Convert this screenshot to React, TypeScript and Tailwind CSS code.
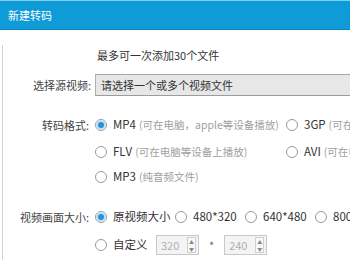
const font = { fontFamily: '"Noto Sans CJK SC", "Microsoft YaHei", sans-serif' };

const Radio = ({ checked }: { checked?: boolean }) => (
  <span className="relative inline-flex h-[12px] w-[12px] shrink-0 items-center justify-center rounded-full border border-[#9a9a9a] bg-white">
    {checked && <span className="h-[6px] w-[6px] rounded-full bg-[#2b8fd6] ring-2 ring-[#bfe0f5]" />}
  </span>
);

const Option = ({ checked, label, hint, className = "" }: { checked?: boolean; label: string; hint?: string; className?: string }) => (
  <div className={"flex shrink-0 items-center whitespace-nowrap " + className}>
    <Radio checked={checked} />
    <span className="ml-[6px] text-[11.5px] text-[#333]">{label}</span>
    {hint && <span className="ml-[3px] text-[10.5px] text-[#a0a0a0]">{hint}</span>}
  </div>
);

const SpinBox = ({ value }: { value: string }) => (
  <div className="flex h-[20px] w-[43px] shrink-0 items-center border border-[#c8c8c8] bg-[#f4f4f4]">
    <span className="ml-[4px] flex-1 text-[11px] text-[#b0b0b0]">{value}</span>
    <div className="mr-[2px] flex h-[16px] w-[9px] flex-col border border-[#cfcfcf] bg-[#f8f8f8]">
      <span className="flex flex-1 items-center justify-center text-[5px] leading-none text-[#888]">▲</span>
      <span className="flex flex-1 items-center justify-center text-[5px] leading-none text-[#888]">▼</span>
    </div>
  </div>
);

export default function App() {
  return (
    <div className="h-[260px] w-[350px] overflow-hidden bg-white" style={font}>
      {/* title bar */}
      <div className="flex h-[30px] items-center border-t border-t-[#7fd0f0] border-b border-b-[#0b86bf] bg-[#0f9ad8] pl-[8px] text-[11px] text-white">
        新建转码
      </div>

      <div className="ml-[2px] h-[230px] border-l border-[#d4d4d4]">
        <div className="mt-[15px] flex h-[20px] items-center pl-[94px] text-[11px] text-[#333]">
          最多可一次添加30个文件
        </div>

        {/* source */}
        <div className="mt-[9px] flex items-center">
          <div className="w-[88px] shrink-0 text-right text-[11px] text-[#444]">选择源视频:</div>
          <div className="ml-[4px] flex h-[22px] flex-1 items-center whitespace-nowrap border-y border-l border-t-[#a8a8a8] border-b-[#9c9c9c] border-l-[#b0b0b0] bg-[#e7e7e7] pl-[5px] text-[11px] text-[#333]">
            请选择一个或多个视频文件
          </div>
        </div>

        {/* format */}
        <div className="mt-[17px] flex">
          <div className="w-[86px] shrink-0 whitespace-nowrap pt-[4px] text-right text-[11px] text-[#444]">转码格式:</div>
          <div className="ml-[6px] flex shrink-0 flex-col">
            <div className="flex h-[24px]">
              <Option checked label="MP4" hint="(可在电脑，apple等设备播放)" className="w-[191px]" />
              <Option label="3GP" hint="(可在电脑等设备上播放)" />
            </div>
            <div className="mt-[3px] flex h-[24px]">
              <Option label="FLV" hint="(可在电脑等设备上播放)" className="w-[191px]" />
              <Option label="AVI" hint="(可在电脑等设备上播放)" />
            </div>
            <div className="mt-[1px] flex h-[24px]">
              <Option label="MP3" hint="(纯音频文件)" />
            </div>
          </div>
        </div>

        {/* size */}
        <div className="mt-[16px] flex">
          <div className="w-[86px] shrink-0 whitespace-nowrap pt-[4px] text-right text-[11px] text-[#444]">视频画面大小:</div>
          <div className="ml-[6px] flex shrink-0 flex-col">
            <div className="flex h-[24px] whitespace-nowrap">
              <Option checked label="原视频大小" className="w-[80px]" />
              <Option label="480*320" className="w-[70px]" />
              <Option label="640*480" className="w-[70px]" />
              <Option label="800*600" />
            </div>
            <div className="mt-[4px] flex h-[24px] items-center">
              <Option label="自定义" className="w-[61px]" />
              <SpinBox value="320" />
              <span className="mx-[10px] text-[11px] text-[#666]">*</span>
              <SpinBox value="240" />
            </div>
          </div>
        </div>
      </div>
    </div>
  );
}
